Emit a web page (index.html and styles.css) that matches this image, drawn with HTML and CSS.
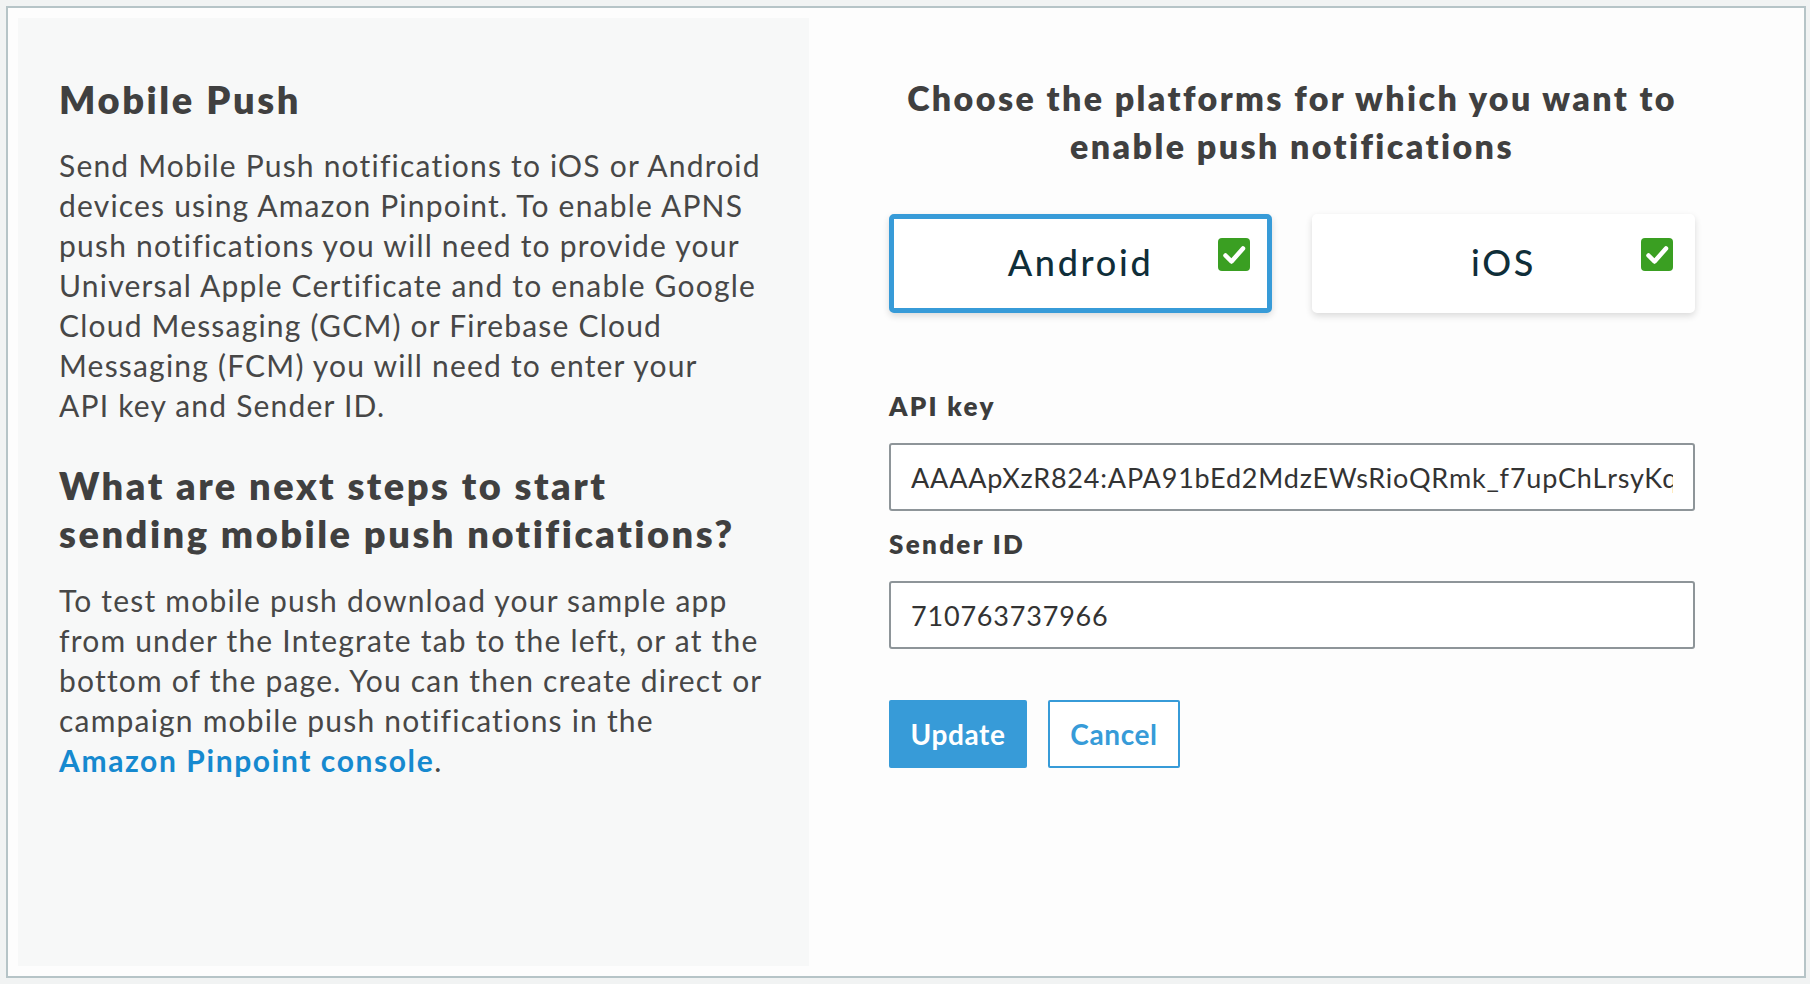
FILE: index.html
```html
<!DOCTYPE html>
<html lang="en">
<head>
<meta charset="utf-8">
<title>Mobile Push</title>
<link rel="stylesheet" href="styles.css">
</head>
<body>
<div class="frame">
  <section class="info">
    <h1 class="info-title">Mobile Push</h1>
    <p class="info-text">Send Mobile Push notifications to iOS or Android<br>devices using Amazon Pinpoint. To enable APNS<br>push notifications you will need to provide your<br>Universal Apple Certificate and to enable Google<br>Cloud Messaging (GCM) or Firebase Cloud<br>Messaging (FCM) you will need to enter your<br>API key and Sender ID.</p>
    <h2 class="info-subtitle">What are next steps to start<br>sending mobile push notifications?</h2>
    <p class="info-text info-text-last">To test mobile push download your sample app<br>from under the Integrate tab to the left, or at the<br>bottom of the page. You can then create direct or<br>campaign mobile push notifications in the<br><a class="link" href="#">Amazon Pinpoint console</a>.</p>
  </section>
  <section class="setup">
    <h2 class="setup-title">Choose the platforms for which you want to<br>enable push notifications</h2>
    <div class="platforms">
      <div class="platform platform-selected">
        <span class="platform-name">Android</span>
        <span class="check"><svg viewBox="0 0 32 33" width="32" height="33"><rect x="0" y="0" width="32" height="33" rx="4" fill="#3a9f22"/><path d="M7.5 17.5 L13.5 23.5 L25 10.5" fill="none" stroke="#fff" stroke-width="4.5" stroke-linecap="round" stroke-linejoin="round"/></svg></span>
      </div>
      <div class="platform">
        <span class="platform-name">iOS</span>
        <span class="check"><svg viewBox="0 0 32 33" width="32" height="33"><rect x="0" y="0" width="32" height="33" rx="4" fill="#3a9f22"/><path d="M7.5 17.5 L13.5 23.5 L25 10.5" fill="none" stroke="#fff" stroke-width="4.5" stroke-linecap="round" stroke-linejoin="round"/></svg></span>
      </div>
    </div>
    <label class="field-label" for="api-key">API key</label>
    <input class="field-input" id="api-key" type="text" value="AAAApXzR824:APA91bEd2MdzEWsRioQRmk_f7upChLrsyKq3xH8vNwT0pLm">
    <label class="field-label field-label-second" for="sender-id">Sender ID</label>
    <input class="field-input" id="sender-id" type="text" value="710763737966">
    <div class="actions">
      <button class="btn btn-primary" type="button">Update</button>
      <button class="btn btn-secondary" type="button">Cancel</button>
    </div>
  </section>
</div>
</body>
</html>
```
FILE: styles.css
```css
* { box-sizing: border-box; }
html, body { margin: 0; padding: 0; }
body {
  background: #f1f3f3;
  font-family: "Lato", "Open Sans", "Liberation Sans", sans-serif;
  color: #444;
}
.frame {
  margin: 6px;
  width: 1800px;
  height: 972px;
  border: 2px solid #b6c4c7;
  background: #fdfdfd;
  padding: 10px;
  display: flex;
}
.info {
  flex: 0 0 791px;
  width: 791px;
  background: #f7f8f8;
  padding: 59px 0 0 41px;
}
.info-title {
  margin: 0;
  font-size: 38px;
  line-height: 44px;
  font-weight: 800;
  letter-spacing: 2.6px;
  color: #404040;
}
.info-text {
  margin: 24px 0 0;
  font-size: 30px;
  line-height: 40px;
  font-weight: 400;
  letter-spacing: 1.2px;
  color: #474747;
  white-space: nowrap;
}
.info-text-last {
  margin-top: 23px;
}
.info-subtitle {
  margin: 36px 0 0;
  font-size: 38px;
  line-height: 48px;
  font-weight: 800;
  letter-spacing: 2.5px;
  color: #404040;
}
.link {
  color: #1689cf;
  font-weight: 700;
  letter-spacing: 1.6px;
  text-decoration: none;
}
.setup {
  flex: 1 1 auto;
  min-width: 0;
  padding: 56px 99px 0 80px;
}
.setup-title {
  margin: 0;
  text-align: center;
  font-size: 34px;
  line-height: 48px;
  font-weight: 800;
  letter-spacing: 2.4px;
  color: #404040;
}
.platforms {
  margin-top: 44px;
  display: flex;
  gap: 40px;
}
.platform {
  position: relative;
  width: 384px;
  height: 99px;
  background: #fff;
  border: 5px solid #fff;
  border-radius: 5px;
  box-shadow: 0 3px 7px rgba(0, 0, 0, 0.14);
  display: flex;
  align-items: center;
  justify-content: center;
  padding-bottom: 4px;
}
.platform-selected {
  border-color: #379bd8;
}
.platform-name {
  font-size: 36px;
  font-weight: 500;
  letter-spacing: 2.7px;
  color: #0f2e39;
}
.check {
  position: absolute;
  top: 19px;
  right: 17px;
  width: 32px;
  height: 33px;
  display: block;
}
.check svg { display: block; }
.field-label {
  display: block;
  margin-top: 78px;
  font-size: 26px;
  line-height: 30px;
  font-weight: 800;
  letter-spacing: 2.3px;
  color: #3d3d3d;
}
.field-label-second {
  margin-top: 18px;
}
.field-input {
  display: block;
  margin-top: 22px;
  width: 806px;
  height: 68px;
  border: 2px solid #8e9599;
  border-radius: 3px;
  background: #fff;
  padding: 0 20px;
  font-family: inherit;
  font-size: 27px;
  letter-spacing: 0.8px;
  color: #333;
  outline: none;
}
.actions {
  margin-top: 51px;
  display: flex;
  gap: 21px;
}
.btn {
  height: 68px;
  padding: 0;
  border-radius: 2px;
  font-family: inherit;
  font-size: 28px;
  font-weight: 700;
  letter-spacing: 0.6px;
  cursor: pointer;
}
.btn-primary {
  width: 138px;
  background: #379bd8;
  border: 2px solid #379bd8;
  color: #fff;
}
.btn-secondary {
  width: 132px;
  background: #fff;
  border: 2px solid #379bd8;
  color: #379bd8;
}
```
